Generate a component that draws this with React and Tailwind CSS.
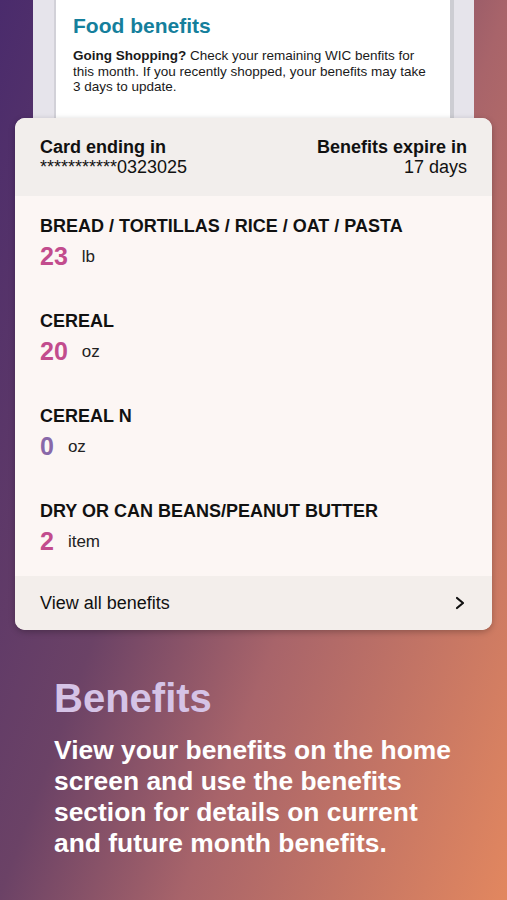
const items = [
  { name: 'BREAD / TORTILLAS / RICE / OAT / PASTA', qty: 23, unit: 'lb' },
  { name: 'CEREAL', qty: 20, unit: 'oz' },
  { name: 'CEREAL N', qty: 0, unit: 'oz' },
  { name: 'DRY OR CAN BEANS/PEANUT BUTTER', qty: 2, unit: 'item' },
];

const App = () => {
  return (
    <div className="min-h-[900px] w-full overflow-hidden font-['Liberation_Sans',Arial,sans-serif] bg-[linear-gradient(110deg,#4a2b6c_0%,#6b4266_39%,#a8646a_61%,#e2875f_100%)]">
      {/* Phone screen peeking above the card */}
      <div className="mx-[33px] h-[118px] bg-[#e6e4eb] pl-[21px] pr-[20px]">
        <div className="h-full border-l-2 border-[#d2d1d8] border-r-[4px] border-r-[#cdcdd3] bg-white pl-[17px] pr-[16px] pt-[12px]">
          <h2 className="text-[21px] leading-[28px] font-bold text-[#157f9c]">Food benefits</h2>
          <p className="mt-[8px] text-[13.5px] leading-[15.5px] text-[#1a1a1a]">
            <span className="font-bold">Going Shopping?</span> Check your remaining WIC benfits for this month. If you recently shopped, your benefits may take 3 days to update.
          </p>
        </div>
      </div>

      {/* Benefits card */}
      <div className="mx-[15px] rounded-[10px] overflow-hidden bg-[#fcf6f4] shadow-[0_2px_6px_rgba(0,0,0,0.25)] text-[#111]">
        <div className="flex justify-between bg-[#f2eeec] px-[25px] pt-[19px] pb-[19px] text-[18px] leading-[20px]">
          <div>
            <div className="font-bold">Card ending in</div>
            <div>***********0323025</div>
          </div>
          <div className="text-right">
            <div className="font-bold">Benefits expire in</div>
            <div>17 days</div>
          </div>
        </div>

        {items.map((item) => (
          <div key={item.name} className="h-[95px] px-[25px] pt-[20px]">
            <div className="text-[18px] leading-[20px] font-bold">{item.name}</div>
            <div className="mt-[7px] flex items-center h-[28px]">
              <span className={`text-[25px] font-bold ${item.qty === 0 ? 'text-[#8868a9]' : 'text-[#c24c8d]'}`}>{item.qty}</span>
              <span className="ml-[14px] text-[17px] text-[#222]">{item.unit}</span>
            </div>
          </div>
        ))}

        <div className="flex items-center justify-between bg-[#f3eeeb] h-[54px] px-[25px] text-[18px]">
          <span>View all benefits</span>
          <svg width="12" height="14" viewBox="0 0 12 14" fill="none" className="mr-[1px]">
            <path d="M3 2l6 5-6 5" stroke="#111" strokeWidth="2.2" strokeLinecap="round" strokeLinejoin="round" />
          </svg>
        </div>
      </div>

      {/* Caption */}
      <div className="px-[54px] pt-[45px]">
        <h1 className="text-[40px] leading-[46px] font-bold text-[#d5c3e6]">Benefits</h1>
        <p className="mt-[14px] w-[410px] text-[26.4px] leading-[31px] font-bold text-white">
          View your benefits on the home screen and use the benefits section for details on current and future month benefits.
        </p>
      </div>
    </div>
  );
};

export default App;
